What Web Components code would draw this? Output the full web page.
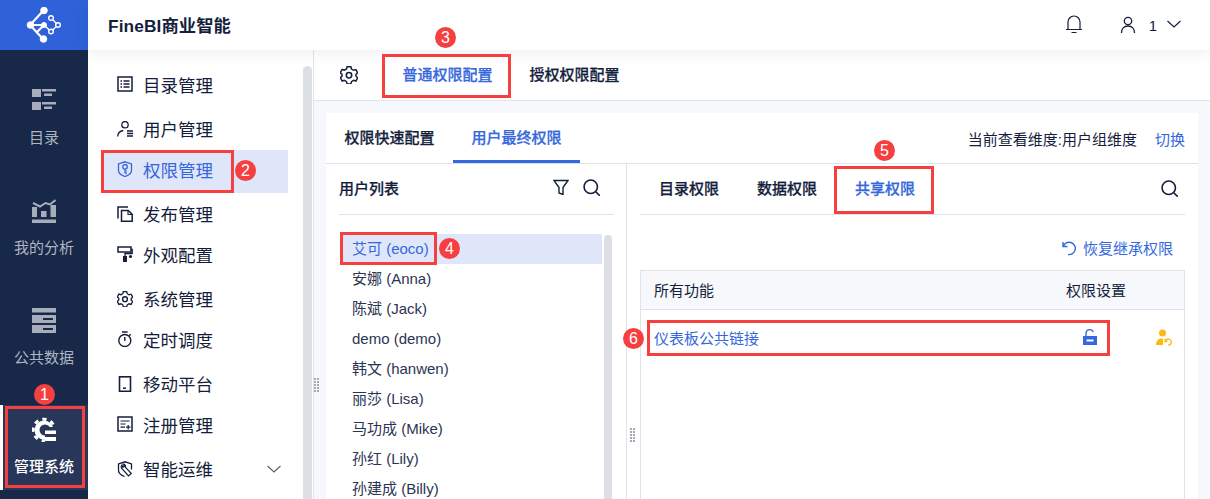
<!doctype html>
<html lang="zh">
<head>
<meta charset="utf-8">
<title>FineBI</title>
<style>
  html, body { margin: 0; height: 100%; overflow: hidden; background: #fff; }
  body { font: 15px "Liberation Sans", "Noto Sans CJK SC", sans-serif; color: #141e3c; }
</style>
</head>
<body>
<bi-app>
  <bi-rail slot="rail"></bi-rail>
  <bi-topbar slot="top"></bi-topbar>
  <bi-sidemenu slot="menu"></bi-sidemenu>
  <bi-content slot="content"></bi-content>
  <bi-mark slot="marks" box="5,406,80,82" badge="34,384" num="1"></bi-mark>
  <bi-mark slot="marks" box="101,150,133,43" badge="235,160" num="2"></bi-mark>
  <bi-mark slot="marks" box="382,54,129,44" badge="435,27" num="3"></bi-mark>
  <bi-mark slot="marks" box="340,232,97,33" badge="439,238" num="4"></bi-mark>
  <bi-mark slot="marks" box="834,166,100,48" badge="874,140" num="5"></bi-mark>
  <bi-mark slot="marks" box="647,320,463,36" badge="623,328" num="6"></bi-mark>
</bi-app>

<script>
const icons = {
  list: '<rect x="1" y="1" width="14" height="14" stroke-width="1.500"/><path d="M3.500 5h1.500M6.500 5h6M3.500 8h1.500M6.500 8h6M3.500 11h1.500M6.500 11h6" stroke-width="1.300"/>',
  user: '<circle cx="8" cy="3.700" r="3.200" stroke-width="1.300"/><path d="M.7 15.500c0-3 2-5.300 5.600-6M10 10h6M10 12.500h6M10 15h6" stroke-width="1.300"/>',
  shield: '<path d="M8 .8l6.500 2.200v6.500c0 2.800-3 4.800-6.500 6C4.500 14.300 1.500 12.300 1.500 9.500V3z" stroke-width="1.300"/><circle cx="8" cy="5.800" r="2.300" stroke-width="1.300"/><path d="M8 8v4.500M8 10h2M8 12.200h2" stroke-width="1.200"/>',
  publish: '<path d="M1 12.500V1h10" stroke-width="1.500"/><path d="M4.500 15.200V4.500h6.800l3.900 3.900v6.800z" stroke-width="1.500"/><path d="M11 4.500v4h4" stroke-width="1.100"/>',
  paint: '<rect x="1" y="1" width="13" height="5" stroke-width="1.500"/><path d="M14 3.500h1.200v4H8v3" stroke-width="1.300"/><rect x="6" y="10" width="4" height="6" fill="currentColor" stroke="none"/><circle cx="13.500" cy="10.500" r="1.600" fill="currentColor" stroke="none"/>',
  gear: '<path d="M6.300 .7h3.400l.5 2 1.900 1.100 2-.6 1.600 2.900-1.500 1.400v1.600l1.500 1.400-1.600 2.900-2-.6-1.900 1.100-.5 2H6.300l-.5-2-1.900-1.100-2 .6L.3 10.400l1.500-1.400V7.400L.3 6l1.600-2.900 2 .6 1.900-1.100z" stroke-width="1.300"/><circle cx="8" cy="8.200" r="2.400" stroke-width="1.400"/>',
  clock: '<circle cx="7.800" cy="9.500" r="6" stroke-width="1.400"/><path d="M7.800 6v4M5 1h5.600M12.200 4.800l1.500-1.500" stroke-width="1.400"/>',
  mobile: '<rect x="2.500" y=".8" width="11" height="14.500" stroke-width="1.600"/><path d="M6 12.200h3" stroke-width="1.500"/>',
  register: '<rect x="1" y="1" width="14" height="14" stroke-width="1.500"/><path d="M3.500 5h9M3.500 8h5M3.500 11.200h4.500M9 11.200h4.500M11.200 9v4.400" stroke-width="1.200"/>',
  wrench: '<path d="M14.500 8.500V3L8 .8 1.500 3v6.500c0 2.800 3 4.800 6 6" stroke-width="1.300"/><path d="M5 3.800a3 3 0 0 0 .8 4.700l5.700 6.500 2.800-2.500-5.800-6.200a3 3 0 0 0-2-3.300l.8 2.500-1.500.8z" stroke-width="1.200"/>',
  search: '<circle cx="7.300" cy="7.300" r="6.300" stroke-width="1.500"/><path d="M12 12l3.800 3.800" stroke-width="1.500"/>',
  filter: '<path d="M1 1.500h14L10 8.500v7l-4-1.500V8.500z" stroke-width="1.400"/>',
}

function svg(name, size = 16, color = 'currentColor') {
  return `<svg width="${size}" height="${size}" viewBox="0 0 16 16" fill="none" stroke="currentColor" style="color:${color};display:block;flex:none">${icons[name]}</svg>`
}

class BiApp extends HTMLElement {
  connectedCallback() {
    this.attachShadow({ mode: 'open' })
    this.shadowRoot.innerHTML = `
    <style>
      :host { display: grid; position: relative; width: 1210px; height: 499px; overflow: hidden;
        grid-template-columns: 88px 225px 1fr; grid-template-rows: 50px 1fr; }
      ::slotted([slot=rail]) { grid-row: 1 / 3; grid-column: 1; }
      ::slotted([slot=top]) { grid-row: 1; grid-column: 2 / 4; }
      ::slotted([slot=menu]) { grid-row: 2; grid-column: 2; }
      ::slotted([slot=content]) { grid-row: 2; grid-column: 3; }
    </style>
    <slot name="rail"></slot><slot name="top"></slot><slot name="menu"></slot><slot name="content"></slot>
    <slot name="marks"></slot>`
  }
}

class BiRail extends HTMLElement {
  connectedCallback() {
    this.attachShadow({ mode: 'open' })
    const items = [
      ['目录', '<path fill="#a7adba" d="M0 1h9v8H0zM0 14h9v8H0zM10 1h14v2.500H10zM12 5.500h8V8h-8zM10 14h14v2.500H10zM12 18.500h8V21h-8z"/>'],
      ['我的分析', '<path fill="#a7adba" d="M0 21.500h24V25H0zM0 9h5v10H0zM9 13h5.500v6H9zM18.500 7H24v12h-5.500z"/><path fill="none" stroke="#a7adba" stroke-width="2" d="M1 5l7 3.500 5.500-3.500 4.500 1.500L23.500 2"/>'],
      ['公共数据', '<path fill="#a7adba" d="M0 0h24v4.500H0zM0 7h24v8H0zM0 17h24v8H0z"/><path fill="#172849" d="M11 10h10v2H11zM11 20h10v2H11z"/>'],
    ]
    this.shadowRoot.innerHTML = `
    <style>
      :host { display: flex; flex-direction: column; background: #172849; position: relative; }
      .logo { height: 50px; background: #2f62d9; flex: none; display: flex; align-items: center; justify-content: center; }
      .item { height: 110px; display: flex; flex-direction: column; align-items: center; color: #b0b5c1; font-size: 15px; flex: none; padding-top: 38px; box-sizing: border-box; }
      .item svg { display: block; }
      .item span { margin-top: 15px; line-height: 20px; }
      .active { margin-top: 25px; height: 85px; background: #28365a; color: #fff; padding: 12px 3px 0 0; border-left: 3px solid #fff; font-weight: 500; }
    </style>
    <div class="logo">
      <svg width="36" height="36" viewBox="0 0 36 36" fill="none" stroke="#fff">
        <path stroke-width="2.200" d="M18 3L4 18l13 14M4 18h14M18 18l-7 7"/>
        <path stroke-width="1.300" d="M18 18l7 6.500 7-6.500-7-7"/>
        <circle cx="18" cy="3.500" r="3.300" fill="#fff"/><circle cx="4.500" cy="18" r="3.300" fill="#fff"/><circle cx="17.500" cy="32" r="3.300" fill="#fff"/><circle cx="18" cy="18" r="2.500" fill="#fff"/>
        <circle cx="25" cy="11" r="2.300" fill="#2f62d9" stroke-width="1.400"/><circle cx="32" cy="18" r="2.300" fill="#2f62d9" stroke-width="1.400"/><circle cx="25" cy="24.500" r="2.300" fill="#2f62d9" stroke-width="1.400"/>
      </svg>
    </div>
    ${items.map(([label, d]) => `<div class="item"><svg width="24" height="25" viewBox="0 0 24 25">${d}</svg><span>${label}</span></div>`).join('')}
    <div class="item active">
      <svg width="24" height="25" viewBox="0 0 24 25">
        <circle cx="12" cy="13" r="9.500" fill="#fff"/>
        <circle cx="12" cy="13" r="10.800" fill="none" stroke="#fff" stroke-width="3" stroke-dasharray="4.240 4.240" stroke-dashoffset="2"/>
        <circle cx="13" cy="13" r="5.500" fill="#28365a"/>
        <path fill="#28365a" d="M13 10h11v15H13z"/>
        <path fill="#fff" d="M13 13.500h11v3.500H13zM13 20h11v4H13z"/>
      </svg>
      <span>管理系统</span>
    </div>`
  }
}

class BiTopbar extends HTMLElement {
  connectedCallback() {
    this.attachShadow({ mode: 'open' })
    this.shadowRoot.innerHTML = `
    <style>
      :host { display: flex; align-items: center; background: #fff; position: relative; z-index: 2; padding: 0 29px 0 20px; box-shadow: 0 3px 14px rgba(20,30,60,.07); }
      b { font-size: 17.300px; font-weight: 700; letter-spacing: .1px; margin-bottom: 2px; }
      .right { margin-left: auto; display: flex; align-items: center; }
      .num { margin: 0 10px 0 13px; font-size: 15px; }
    </style>
    <b>FineBI商业智能</b>
    <div class="right">
      <svg width="18" height="20" viewBox="0 0 18 20" fill="none" stroke="#141e3c" stroke-width="1.200" style="margin-right:37px;margin-top:-3px"><path d="M1 15.500h16M3 15.500V8a6 6 0 0 1 12 0v7.500M6.500 18.500h5"/></svg>
      <svg width="16" height="18" viewBox="0 0 16 18" fill="none" stroke="#141e3c" stroke-width="1.300"><circle cx="8" cy="5" r="3.700"/><path d="M1.500 17c0-4 2.500-7 6.500-7s6.500 3 6.500 7"/></svg>
      <span class="num">1</span>
      <svg width="14" height="8" viewBox="0 0 14 8" fill="none" stroke="#141e3c" stroke-width="1.200" style="margin-top:-2px"><path d="M.5 1L7 7l6.500-6"/></svg>
    </div>`
  }
}

class BiMenuItem extends HTMLElement {
  connectedCallback() {
    this.attachShadow({ mode: 'open' })
    this.shadowRoot.innerHTML = `
    <style>
      :host { display: flex; align-items: center; height: 42.500px; box-sizing: border-box; padding: 0 0 4px 16px; gap: 10px; font-size: 17.500px; color: #141e3c; position: relative; }
      :host(:nth-child(even)) { padding-bottom: 0; }
      :host([active]) { background: #e0e6fa; color: #3568dc; }
      .arrow { position: absolute; right: 7px; top: 17px; }
    </style>
    ${svg(this.getAttribute('icon'))}
    <slot></slot>
    ${this.hasAttribute('arrow') ? '<svg class="arrow" width="14" height="8" viewBox="0 0 14 8" fill="none" stroke="#5a6478" stroke-width="1.200"><path d="M.5 1L7 7l6.500-6"/></svg>' : ''}`
  }
}

class BiSidemenu extends HTMLElement {
  connectedCallback() {
    this.attachShadow({ mode: 'open' })
    this.shadowRoot.innerHTML = `
    <style>
      :host { display: flex; background: #fff; padding: 15px 0 0 13px; overflow: hidden; min-height: 0; }
      .items { width: 187px; flex: none; }
      .bar { width: 9px; margin: 1px 0 0 15px; background: #dcdfe4; border-radius: 5px 5px 0 0; }
    </style>
    <div class="items">
      <bi-menu-item icon="list">目录管理</bi-menu-item>
      <bi-menu-item icon="user">用户管理</bi-menu-item>
      <bi-menu-item icon="shield" active>权限管理</bi-menu-item>
      <bi-menu-item icon="publish">发布管理</bi-menu-item>
      <bi-menu-item icon="paint">外观配置</bi-menu-item>
      <bi-menu-item icon="gear">系统管理</bi-menu-item>
      <bi-menu-item icon="clock">定时调度</bi-menu-item>
      <bi-menu-item icon="mobile">移动平台</bi-menu-item>
      <bi-menu-item icon="register">注册管理</bi-menu-item>
      <bi-menu-item icon="wrench" arrow>智能运维</bi-menu-item>
    </div>
    <div class="bar"></div>`
  }
}

class BiTabs extends HTMLElement {
  connectedCallback() {
    this.attachShadow({ mode: 'open' })
    this.shadowRoot.innerHTML = `
    <style>
      :host { display: flex; align-items: stretch; }
      ::slotted(*) { display: flex; align-items: center; padding: 0 var(--tab-pad, 18.500px) 4px; font-size: 15px; font-weight: 500; -webkit-text-stroke: .25px currentColor; color: #141e3c; box-sizing: border-box; }
      ::slotted(.on) { color: #3568dc; }
      ::slotted(.line) { border-bottom: 3px solid #3568dc; padding-bottom: 1px; }
    </style>
    <slot></slot>`
  }
}

const handle = '<svg width="6" height="15" viewBox="0 0 6 15" fill="#a4a9b6" style="display:block"><path d="M0 0h2v2H0zM3 0h2v2H3zM0 3h2v2H0zM3 3h2v2H3zM0 6h2v2H0zM3 6h2v2H3zM0 9h2v2H0zM3 9h2v2H3zM0 12h2v2H0zM3 12h2v2H3z"/></svg>'

class BiUserList extends HTMLElement {
  connectedCallback() {
    this.attachShadow({ mode: 'open' })
    const users = ['艾可 (eoco)', '安娜 (Anna)', '陈斌 (Jack)', 'demo (demo)', '韩文 (hanwen)', '丽莎 (Lisa)', '马功成 (Mike)', '孙红 (Lily)', '孙建成 (Billy)']
    this.shadowRoot.innerHTML = `
    <style>
      :host { display: flex; flex-direction: column; width: 301px; flex: none; border-right: 1px solid #dfe3ec; box-sizing: border-box; overflow: hidden; }
      .head { margin: 0 12px 0 13px; height: 51px; flex: none; display: flex; align-items: center; border-bottom: 1px solid #dfe3ec; font-size: 15px; gap: 14px; box-sizing: border-box; padding: 0 14px 4px 0; }
      .head span { margin-right: auto; font-weight: 500; -webkit-text-stroke: .2px currentColor; }
      .body { display: flex; margin: 19px 0 0 14px; }
      .rows { width: 262px; flex: none; }
      .row { height: 30px; line-height: 30px; padding-left: 12px; font-size: 15px; color: #2b3553; }
      .row.on { background: #e0e6fa; color: #3568dc; }
      .bar { width: 8px; margin: 1px 0 0 2px; background: #dcdfe4; border-radius: 4px 4px 0 0; }
    </style>
    <div class="head"><span>用户列表</span>${svg('filter', 16)}${svg('search', 17)}</div>
    <div class="body">
      <div class="rows">${users.map((u, i) => `<div class="row${i ? '' : ' on'}">${u}</div>`).join('')}</div>
      <div class="bar"></div>
    </div>`
  }
}

class BiPermTable extends HTMLElement {
  connectedCallback() {
    this.attachShadow({ mode: 'open' })
    this.shadowRoot.innerHTML = `
    <style>
      :host { display: flex; flex-direction: column; flex: 1; min-width: 0; padding: 0 13px; position: relative; }
      .tabs { height: 51px; flex: none; display: flex; border-bottom: 1px solid #dfe3ec; align-items: stretch; box-sizing: border-box; --tab-pad: 19px; }
      .tabs svg { margin: 16px 7px 0 auto; }
      .restore { height: 55px; flex: none; display: flex; align-items: center; justify-content: flex-end; gap: 7px; padding: 10px 12px 0 0; color: #3568dc; font-size: 15px; box-sizing: border-box; }
      .table { flex: 1; border: 1px solid #dfe3ec; border-bottom: 0; }
      .th { height: 38px; box-sizing: content-box; display: flex; align-items: center; background: #f6f8fc; border-bottom: 1px solid #dfe3ec; font-size: 15px; padding: 0 0 0 13px; }
      .th span { margin-bottom: 2px; }
      .th span:last-child { margin-left: auto; margin-right: 58px; }
      .tr { height: 58px; box-sizing: border-box; display: flex; align-items: center; padding: 0 0 4px 13px; color: #3568dc; font-size: 15px; }
      .tr svg:first-of-type { margin-left: auto; }
      .handle { position: absolute; left: 3px; top: 264px; }
    </style>
    <div class="tabs">
      <bi-tabs><div>目录权限</div><div>数据权限</div><div class="on">共享权限</div></bi-tabs>
      ${svg('search', 17)}
    </div>
    <div class="restore">
      <svg width="16" height="16" viewBox="0 0 16 16" fill="none" stroke="currentColor" stroke-width="1.400" style="margin-left:-1px"><path d="M3 2v4.500h4.500M3.300 6.300A6.200 6.200 0 1 1 8 14.500"/></svg>
      <span>恢复继承权限</span>
    </div>
    <div class="table">
      <div class="th"><span>所有功能</span><span>权限设置</span></div>
      <div class="tr">
        <span>仪表板公共链接</span>
        <svg width="14" height="16" viewBox="0 0 14 16" fill="none" style="display:block"><path stroke="#3568dc" stroke-width="1.400" d="M3 7V4a3.800 3.800 0 0 1 7.300-1"/><path fill="#3568dc" d="M0 7h14v9H0z"/><path fill="#fff" d="M3.500 10.500h7v2h-7z"/></svg>
        <svg width="17" height="17" viewBox="0 0 17 17" fill="none" style="display:block;margin:0 11px 0 59px"><circle cx="6.500" cy="4" r="3.500" fill="#fdb913"/><path fill="#fdb913" d="M0 16c0-4 2-6.500 5.500-6.500H7V16z"/><path stroke="#fdb913" stroke-width="1.300" d="M9 10v2.500h2.500M9.500 12a3 3 0 1 1 2.500 4"/></svg>
      </div>
    </div>
    <div class="handle">${handle}</div>`
  }
}

class BiContent extends HTMLElement {
  connectedCallback() {
    this.attachShadow({ mode: 'open' })
    this.shadowRoot.innerHTML = `
    <style>
      :host { display: flex; flex-direction: column; border-left: 1px solid #dfe3ec; background: #f6f8fc; min-height: 0; overflow: hidden; }
      .head { height: 51px; flex: none; background: #fff; border-bottom: 1px solid #dfe3ec; display: flex; align-items: stretch; box-sizing: border-box; padding-left: 26px; }
      .head svg { margin-top: 16px; }
      .head bi-tabs { margin-left: 26px; }
      .wrap { flex: 1; display: flex; padding: 12px 12px 0 12px; position: relative; min-height: 0; }
      .panel { flex: 1; background: #fff; display: flex; flex-direction: column; min-width: 0; }
      .panelhead { height: 51px; flex: none; display: flex; align-items: stretch; border-bottom: 1px solid #dfe3ec; box-sizing: border-box; }
      .dim { margin-left: auto; display: flex; align-items: center; gap: 18px; padding-right: 13px; font-size: 15px; }
      .dim a { color: #3568dc; }
      .cols { flex: 1; display: flex; min-height: 0; }
      .handle { position: absolute; left: 0; top: 277px; }
    </style>
    <div class="head">
      ${svg('gear', 18)}
      <bi-tabs><div class="on">普通权限配置</div><div>授权权限配置</div></bi-tabs>
    </div>
    <div class="wrap">
      <div class="handle">${handle}</div>
      <div class="panel">
        <div class="panelhead">
          <bi-tabs><div>权限快速配置</div><div class="on line">用户最终权限</div></bi-tabs>
          <div class="dim"><span>当前查看维度:用户组维度</span><a>切换</a></div>
        </div>
        <div class="cols">
          <bi-user-list></bi-user-list>
          <bi-perm-table></bi-perm-table>
        </div>
      </div>
    </div>`
  }
}

// numbered red annotations over the screenshot
class BiMark extends HTMLElement {
  connectedCallback() {
    this.attachShadow({ mode: 'open' })
    const [x, y, w, h] = this.getAttribute('box').split(',')
    const [bx, by] = this.getAttribute('badge').split(',')
    this.shadowRoot.innerHTML = `
    <style>
      :host { display: contents; }
      .box { position: absolute; left: ${x}px; top: ${y}px; width: ${w}px; height: ${h}px; box-sizing: border-box; border: 3px solid #f5403f; z-index: 5; }
      .num { position: absolute; left: ${bx}px; top: ${by}px; width: 21px; height: 21px; border-radius: 50%; background: #f5403f; color: #fff; font-size: 16px; line-height: 21px; text-align: center; z-index: 6; }
    </style>
    <div class="box"></div><div class="num">${this.getAttribute('num')}</div>`
  }
}

customElements.define('bi-app', BiApp)
customElements.define('bi-rail', BiRail)
customElements.define('bi-topbar', BiTopbar)
customElements.define('bi-menu-item', BiMenuItem)
customElements.define('bi-sidemenu', BiSidemenu)
customElements.define('bi-tabs', BiTabs)
customElements.define('bi-user-list', BiUserList)
customElements.define('bi-perm-table', BiPermTable)
customElements.define('bi-content', BiContent)
customElements.define('bi-mark', BiMark)
</script>
</body>
</html>
